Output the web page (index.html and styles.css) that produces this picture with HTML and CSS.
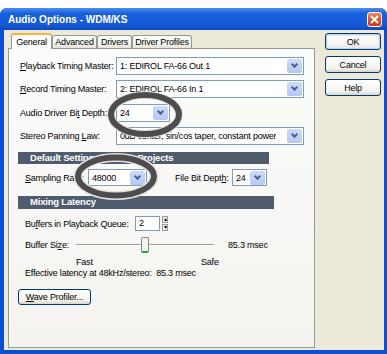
FILE: index.html
```html
<!DOCTYPE html>
<html lang="en">
<head>
  <meta charset="UTF-8">
  <title>Audio Options - WDM/KS</title>
  <link rel="stylesheet" href="styles.css">
</head>
<body>
  <div class="window">
    <div class="titlebar">
      <span class="title">Audio Options - WDM/KS</span>
      <span class="close">
        <svg width="9" height="9" viewBox="0 0 9 9"><path d="M1 1L8 8M8 1L1 8" stroke="#fff" stroke-width="2"/></svg>
      </span>
    </div>

    <div class="client">
      <div class="tabarea">
        <div class="tabs">
          <div class="tab tab-on">General</div>
          <div class="tab tab-adv">Advanced</div>
          <div class="tab tab-drv">Drivers</div>
          <div class="tab tab-prof">Driver Profiles</div>
        </div>

        <div class="panel">
          <!-- device rows -->
          <div class="row r1">
            <span class="lbl"><u>P</u>layback Timing Master:</span>
            <div class="combo wide"><span class="val">1: EDIROL FA-66 Out 1</span><span class="drop"></span></div>
          </div>
          <div class="row r2">
            <span class="lbl"><u>R</u>ecord Timing Master:</span>
            <div class="combo wide"><span class="val">2: EDIROL FA-66 In 1</span><span class="drop"></span></div>
          </div>
          <div class="row r3">
            <span class="lbl">Audio Driver Bi<u>t</u> Depth:</span>
            <div class="combo bits"><span class="val">24</span><span class="drop"></span></div>
          </div>
          <div class="row r4">
            <span class="lbl">Stereo Panning <u>L</u>aw:</span>
            <div class="combo wide"><span class="val">0dB center, sin/cos taper, constant power</span><span class="drop"></span></div>
          </div>

          <div class="section s1">Default Settings for New Projects</div>
          <div class="row r5">
            <span class="lbl-rate"><u>S</u>ampling Rate:</span>
            <div class="combo rate"><span class="val">48000</span><span class="drop"></span></div>
            <span class="lbl-file">File Bit Dept<u>h</u>:</span>
            <div class="combo fbits"><span class="val">24</span><span class="drop"></span></div>
          </div>

          <div class="section s2">Mixing Latency</div>
          <div class="row r6">
            <span class="lbl-buf">Bu<u>f</u>fers in Playback Queue:</span>
            <div class="spin">2</div>
            <div class="spinbtns"><span>&#9652;</span><span>&#9662;</span></div>
          </div>
          <div class="row r7">
            <span class="lbl-size">Buffer Si<u>z</u>e:</span>
            <div class="slider"><div class="thumb"></div></div>
            <span class="msec">85.3 msec</span>
          </div>
          <div class="row r8">
            <span class="fast">Fast</span>
            <span>Safe</span>
          </div>
          <div class="row r9">Effective latency at 48kHz/stereo:&nbsp; 85.3 msec</div>
          <button class="btn wave"><u>W</u>ave Profiler...</button>
        </div>
      </div>

      <div class="buttons">
        <button class="btn side default">OK</button>
        <button class="btn side">Cancel</button>
        <button class="btn side">Help</button>
      </div>
    </div>
  </div>

  <!-- annotation circles drawn over the dialog -->
  <svg class="marks" width="387" height="354" viewBox="0 0 387 354">
    <ellipse cx="145" cy="114.5" rx="34" ry="19.5" fill="none" stroke="#e2e2e2" stroke-width="8"/>
    <ellipse cx="145" cy="114.5" rx="34" ry="19.5" fill="none" stroke="#4d4d4d" stroke-width="6"/>
    <ellipse cx="116" cy="176.5" rx="38" ry="19" fill="none" stroke="#e2e2e2" stroke-width="9"/>
    <ellipse cx="116" cy="176.5" rx="38" ry="19" fill="none" stroke="#4d4d4d" stroke-width="6"/>
  </svg>
</body>
</html>
```

FILE: styles.css
```css
body {
  margin: 0;
  width: 387px;
  height: 354px;
  overflow: hidden;
  background: #fff;
  font-family: "Liberation Sans", Arial, sans-serif;
  font-size: 9px;
  letter-spacing: -0.2px;
  color: #000;
}
.window {
  margin-top: 8px;
  height: 346px;
  display: flex;
  flex-direction: column;
  background: #0b4fd2;
  border-radius: 7px 7px 0 0;
}
.titlebar {
  height: 22px;
  display: flex;
  align-items: center;
  justify-content: space-between;
  padding: 0 5px 0 8px;
  border-radius: 7px 7px 0 0;
  background: linear-gradient(#4a8ff2, #1a60db 25%, #1558d6 80%, #0d49c0);
}
.title {
  color: #fff;
  font-weight: bold;
  font-size: 10px;
  letter-spacing: 0;
}
.close {
  width: 15px;
  height: 15px;
  display: flex;
  align-items: center;
  justify-content: center;
  border: 1px solid #fff;
  border-radius: 3px;
  box-sizing: border-box;
  background: linear-gradient(#f08a6a, #dd4a24 60%, #c93c18);
}
.client {
  flex: 1;
  display: flex;
  margin: 0 3px 4px 4px;
  padding: 3px 0 2px 4px;
  background: #ece9d8;
}
.tabarea {
  width: 307px;
  display: flex;
  flex-direction: column;
}
.tabs {
  height: 15px;
  display: flex;
  align-items: flex-end;
  padding-left: 3px;
}
.tab {
  height: 13px;
  box-sizing: border-box;
  border: 1px solid #919b9c;
  border-bottom: none;
  border-radius: 3px 3px 0 0;
  background: linear-gradient(#fff, #f3f2ee 70%, #e4e2d8);
  text-align: center;
  line-height: 12px;
}
.tab-on {
  width: 41px;
  height: 16px;
  margin-bottom: -1px;
  position: relative;
  z-index: 1;
  border-top: 2px solid #f5b53a;
  background: #fcfcfe;
  line-height: 14px;
}
.tab-adv { width: 45px; }
.tab-drv { width: 35px; }
.tab-prof { width: 60px; }
.panel {
  flex: 1;
  border: 1px solid #919b9c;
  background: linear-gradient(#fcfcfc, #f4f3ef);
  display: flex;
  flex-direction: column;
  align-items: flex-start;
}
.row {
  display: flex;
  align-items: center;
  height: 18px;
  margin-left: 11px;
}
.r1 { margin-top: 8px; }
.r2 { margin-top: 5px; }
.r3 { margin-top: 6px; }
.r4 { margin-top: 5px; }
.lbl { width: 96px; }
.combo {
  height: 18px;
  box-sizing: border-box;
  border: 1px solid #7f9db9;
  background: #fff;
  display: flex;
  align-items: center;
  justify-content: space-between;
  padding-left: 3px;
}
.val {
  white-space: nowrap;
  overflow: hidden;
}
.drop {
  width: 15px;
  height: 14px;
  margin-right: 1px;
  flex: none;
  border-radius: 2px;
  background: linear-gradient(#cddbfb, #b4c8f4) no-repeat;
  position: relative;
}
.drop::after {
  content: "";
  position: absolute;
  left: 5px;
  top: 3px;
  width: 3px;
  height: 3px;
  border-right: 2px solid #4d6185;
  border-bottom: 2px solid #4d6185;
  transform: rotate(45deg);
}
.wide { width: 188px; }
.bits { width: 54px; }
.section {
  margin: 7px 0 0 9px;
  width: 251px;
  height: 12px;
  padding-left: 12px;
  box-sizing: border-box;
  background: #505c6d;
  color: #fff;
  font-weight: bold;
  font-size: 9.5px;
  line-height: 12px;
}
.s2 {
  margin-top: 10px;
  width: 256px;
  height: 13px;
}
.r5 {
  margin: 5px 0 0 16px;
  height: 17px;
}
.lbl-rate { width: 63px; }
.rate { width: 59px; height: 17px; }
.lbl-file { width: 57px; margin-left: 28px; }
.fbits { width: 35px; height: 17px; }
.r6 {
  margin: 7px 0 0 16px;
  height: 15px;
}
.lbl-buf { width: 110px; }
.spin {
  width: 25px;
  height: 15px;
  box-sizing: border-box;
  border: 1px solid #7f9db9;
  background: #fff;
  padding-left: 3px;
  line-height: 13px;
}
.spinbtns {
  margin-left: 2px;
  display: flex;
  flex-direction: column;
  gap: 1px;
}
.spinbtns span {
  width: 6px;
  height: 7px;
  box-sizing: border-box;
  border: 1px solid #9a9a9a;
  background: #f4f4f4;
  font-size: 6px;
  line-height: 5px;
  text-align: center;
  letter-spacing: 0;
}
.r7 {
  margin: 5px 0 0 16px;
  height: 18px;
}
.lbl-size { width: 51px; }
.slider {
  width: 138px;
  height: 17px;
  background: linear-gradient(transparent 7px, #9d9d9d 7px, #9d9d9d 8px, #fff 8px, #fff 9px, transparent 9px);
}
.thumb {
  width: 8px;
  height: 16px;
  margin-left: 65px;
  box-sizing: border-box;
  border: 1px solid #7c8b7c;
  border-bottom: 2px solid #22a33a;
  border-radius: 2px;
  background: #f3f3ef;
}
.msec { margin-left: 14px; }
.r8 {
  margin: 3px 0 0 67px;
  height: 10px;
}
.fast { width: 125px; }
.r9 {
  margin: 1px 0 0 16px;
  height: 10px;
}
.btn {
  font-family: "Liberation Sans", Arial, sans-serif;
  font-size: 9px;
  letter-spacing: -0.2px;
  color: #000;
  padding: 0;
  border: 1px solid #003c74;
  border-radius: 3px;
  background: linear-gradient(#fff, #f4f3ee 75%, #d8d4c8);
}
.wave {
  margin: 11px 0 0 9px;
  width: 73px;
  height: 16px;
}
.buttons {
  margin: 0 0 0 10px;
  display: flex;
  flex-direction: column;
  gap: 6px;
}
.side {
  width: 56px;
  height: 17px;
}
.default {
  box-shadow: inset 0 0 0 1px #bcd0f4, inset 0 0 0 2px #e3ecfc;
}
.marks {
  position: absolute;
  left: 0;
  top: 0;
  pointer-events: none;
}
```
